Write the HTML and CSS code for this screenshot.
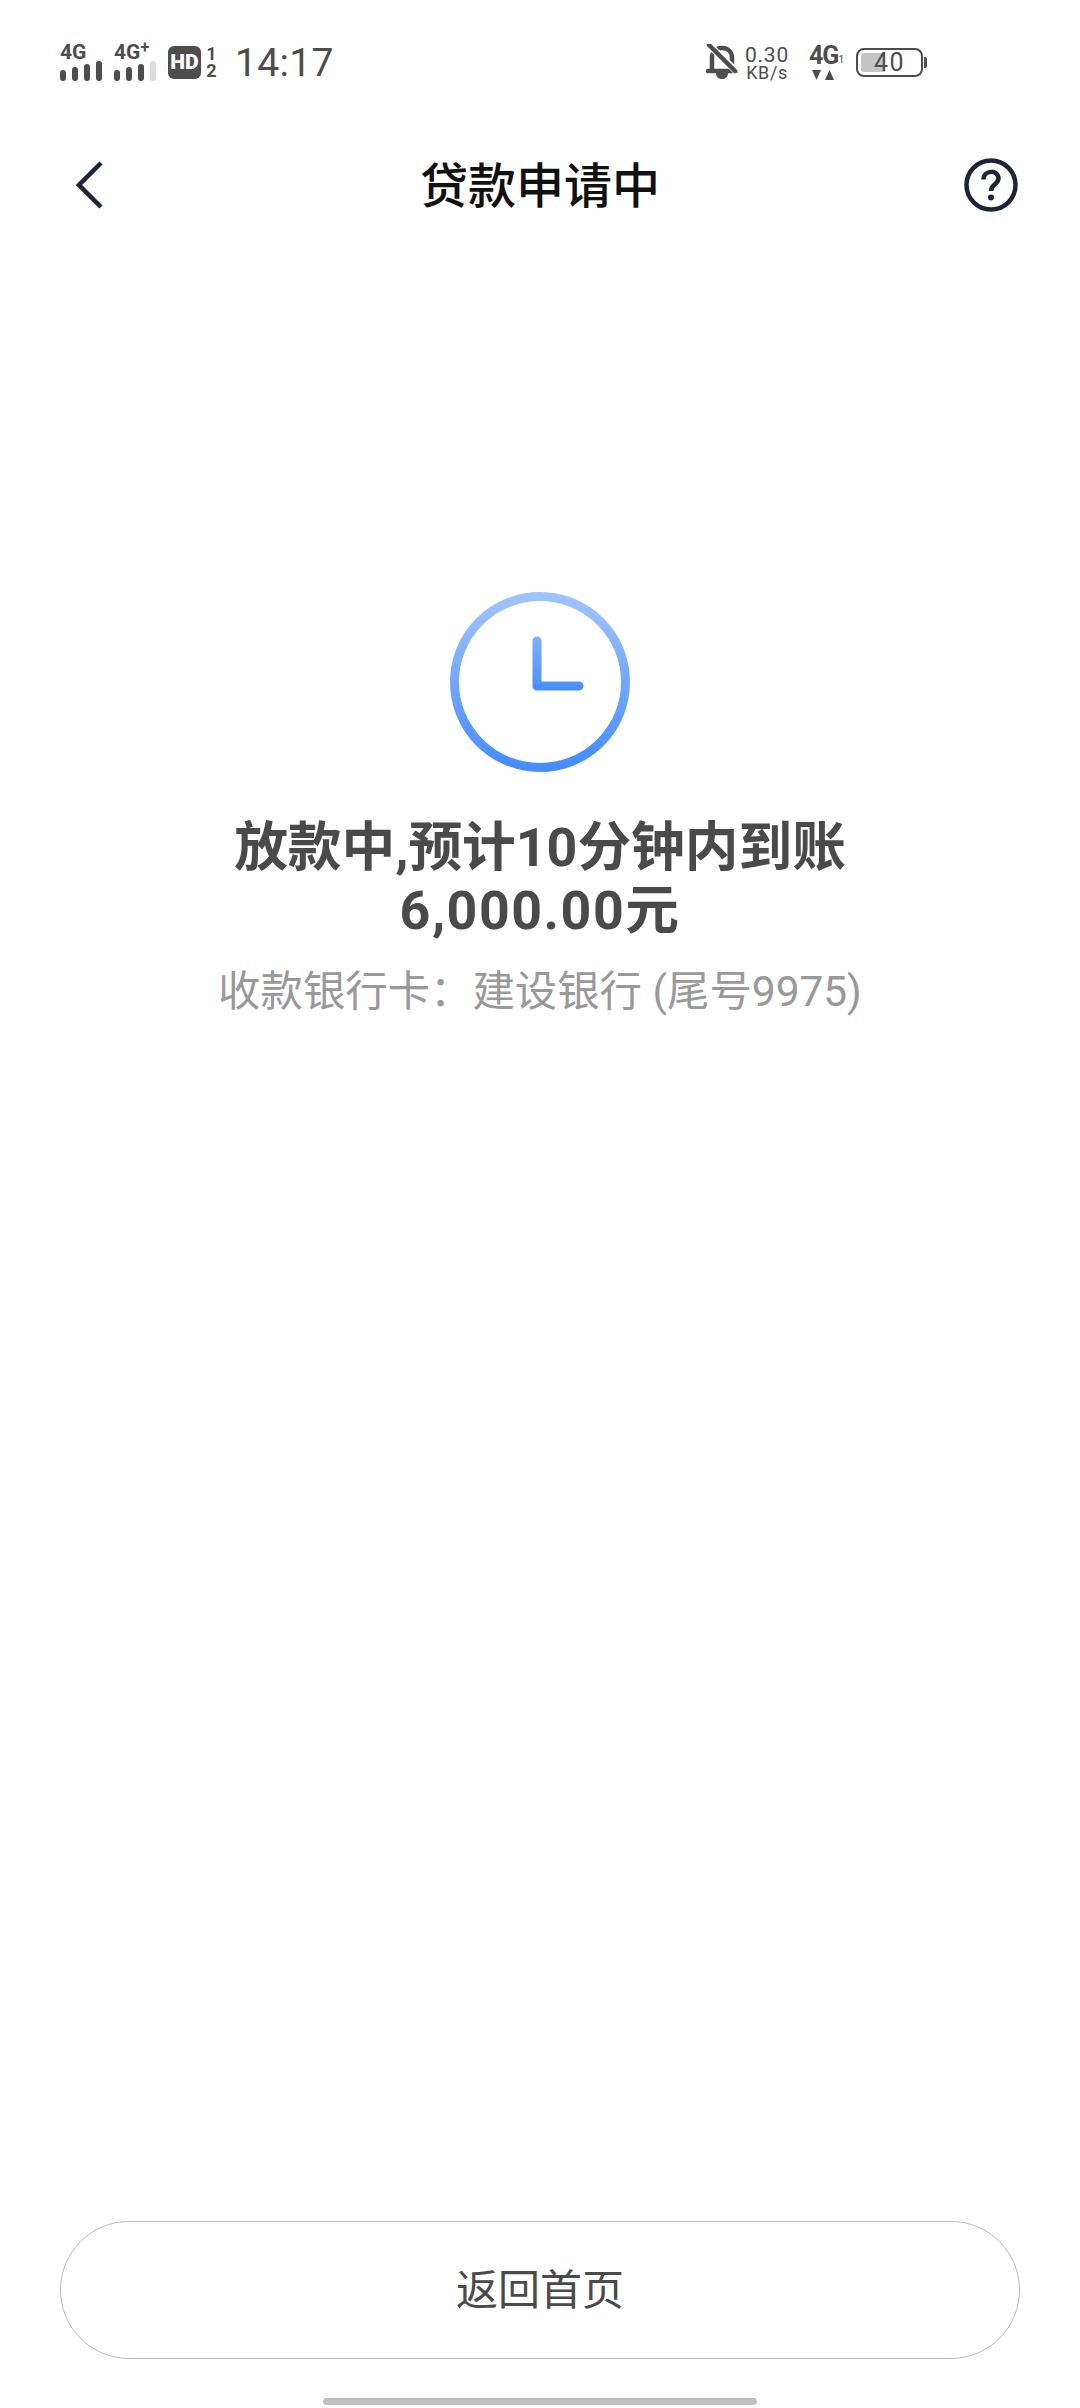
FILE: index.html
```html
<!DOCTYPE html>
<html>
	<head>
		<meta charset="UTF-8">
		<title>贷款申请中</title>
		<link rel="stylesheet" href="styles.css">
	</head>
	<body>
		<div class="page">
			<div class="status">
				<div class="statusLeft">
					<div class="signal">
						<span class="netName">4G</span>
						<svg width="42" height="20" viewBox="0 0 42 20">
							<rect x="0" y="9" width="6" height="11" rx="3" fill="#4d4d4d"/>
							<rect x="12" y="6" width="6" height="14" rx="3" fill="#4d4d4d"/>
							<rect x="24" y="3" width="6" height="17" rx="3" fill="#4d4d4d"/>
							<rect x="36" y="0" width="6" height="20" rx="3" fill="#4d4d4d"/>
						</svg>
					</div>
					<div class="signal">
						<span class="netName">4G<sup class="plus">+</sup></span>
						<svg width="42" height="20" viewBox="0 0 42 20">
							<rect x="0" y="9" width="6" height="11" rx="3" fill="#4d4d4d"/>
							<rect x="12" y="6" width="6" height="14" rx="3" fill="#4d4d4d"/>
							<rect x="24" y="3" width="6" height="17" rx="3" fill="#4d4d4d"/>
							<rect x="36" y="0" width="6" height="20" rx="3" fill="#dcdcdc"/>
						</svg>
					</div>
					<div class="hd"><span class="hdText">HD</span></div>
					<div class="simNum"><span>1</span><span>2</span></div>
					<div class="clock">14:17</div>
				</div>
				<div class="statusRight">
					<svg class="bell" width="32" height="36" viewBox="0 0 32 36">
						<path d="M6 25 L6 14 C6 8 10 4 16 4 C22 4 26 8 26 14 L26 25" fill="none" stroke="#4d4d4d" stroke-width="4.500"/>
						<path d="M2 27 L30 27" stroke="#4d4d4d" stroke-width="4.500" stroke-linecap="round"/>
						<path d="M10 29 C10 37 22 37 22 29 Z" fill="#4d4d4d"/>
						<path d="M4 2 L31 28" stroke="#fff" stroke-width="7"/>
						<path d="M3 1 L29 27" stroke="#4d4d4d" stroke-width="4.500" stroke-linecap="round"/>
					</svg>
					<div class="speed"><span class="speedNum">0.30</span><span class="speedUnit">KB/s</span></div>
					<div class="net2">
						<div class="net2Top"><span class="net2Name">4G</span><span class="net2Sim">1</span></div>
						<svg width="22" height="10" viewBox="0 0 22 10">
							<path d="M0 0 H9 L4.500 10 Z" fill="#4d4d4d"/>
							<path d="M13 10 H22 L17.500 0 Z" fill="#4d4d4d"/>
						</svg>
					</div>
					<div class="battery">
						<div class="batteryBox">
							<div class="batteryFill"></div>
							<span class="batteryText">40</span>
						</div>
						<div class="batteryNub"></div>
					</div>
				</div>
			</div>
			<div class="nav">
				<svg class="navBack" width="28" height="48" viewBox="0 0 28 48">
					<path d="M25 2 L3 24 L25 46" fill="none" stroke="#1c2438" stroke-width="4.500"/>
				</svg>
				<div class="navTitle">贷款申请中</div>
				<svg class="navHelp" width="54" height="54" viewBox="0 0 54 54">
					<circle cx="27" cy="27" r="24.500" fill="none" stroke="#1c2438" stroke-width="4.500"/>
					<path d="M19.500 21.500 C19.500 11.500 34.500 11.500 34.500 20.500 C34.500 26 27 26.500 27 33" fill="none" stroke="#1c2438" stroke-width="4.500"/>
					<circle cx="27" cy="39.500" r="3" fill="#1c2438"/>
				</svg>
			</div>
			<div class="main">
				<svg width="180" height="180" viewBox="0 0 180 180">
					<defs>
						<linearGradient id="clockBlue" x1="0" y1="0" x2="0" y2="1">
							<stop offset="0" stop-color="#a0c3fc"/>
							<stop offset="1" stop-color="#468cfb"/>
						</linearGradient>
						<linearGradient id="handBlue" gradientUnits="userSpaceOnUse" x1="0" y1="45" x2="0" y2="100">
							<stop offset="0" stop-color="#7fb0fb"/>
							<stop offset="1" stop-color="#468cfb"/>
						</linearGradient>
					</defs>
					<circle cx="90" cy="90" r="85.500" fill="none" stroke="url(#clockBlue)" stroke-width="9"/>
					<path d="M87 49 V94 H129" fill="none" stroke="url(#handBlue)" stroke-width="9" stroke-linecap="round" stroke-linejoin="round"/>
				</svg>
				<div class="result">放款中,预计10分钟内到账<br><span class="amount">6,000.00元</span></div>
				<div class="cardInfo">收款银行卡：建设银行 (尾号9975)</div>
			</div>
			<div class="footer">
				<div class="backBtn">返回首页</div>
				<div class="homeBar"></div>
			</div>
		</div>
	</body>
</html>
```
FILE: styles.css
```css
*{
	margin:0;
	padding:0;
	box-sizing:border-box;
}
body{
	background:#fff;
	font-family:"Roboto","Noto Sans CJK SC",sans-serif;
}
.page{
	display:flex;
	flex-direction:column;
	width:1080px;
	height:2408px;
	overflow:hidden;
}
.status{
	display:flex;
	justify-content:space-between;
	align-items:center;
	height:124px;
	padding:0 153px 0 60px;
	color:#4d4d4d;
}
.statusLeft{
	display:flex;
	align-items:center;
}
.statusRight{
	display:flex;
	align-items:center;
}
.signal{
	display:flex;
	flex-direction:column;
	width:54px;
	font-weight:700;
}
.netName{
	position:relative;
	height:17px;
	font-size:21px;
	line-height:16px;
}
.plus{
	position:absolute;
	top:-3px;
	font-size:16px;
	line-height:14px;
}
.hd{
	display:flex;
	justify-content:center;
	align-items:center;
	width:33px;
	height:33px;
	background:#4d4d4d;
	border-radius:6px;
}
.hdText{
	font-size:21px;
	font-weight:900;
	color:#fff;
}
.simNum{
	display:flex;
	flex-direction:column;
	width:31px;
	padding-right:10px;
	font-size:18px;
	font-weight:700;
	line-height:17px;
	text-align:center;
}
.clock{
	margin:2px 0 0 3px;
	font-size:39px;
	line-height:44px;
	letter-spacing:0.3px;
}
.speed{
	display:flex;
	flex-direction:column;
	align-items:center;
	width:46px;
	margin-left:6px;
}
.speedNum{
	font-size:21px;
	line-height:20px;
	letter-spacing:0.8px;
}
.speedUnit{
	font-size:18px;
	line-height:15px;
	letter-spacing:0.6px;
}
.net2{
	display:flex;
	flex-direction:column;
	width:32px;
	margin-left:19px;
	font-weight:700;
	align-items:flex-start;
}
.net2Top{
	display:flex;
	align-items:flex-end;
	height:24px;
	margin-bottom:2px;
}
.net2Name{
	font-size:25px;
	line-height:24px;
	letter-spacing:-1px;
}
.net2Sim{
	font-size:10px;
	line-height:16px;
	font-weight:400;
}
.net2 svg{
	margin-left:3px;
}
.battery{
	display:flex;
	align-items:center;
	margin-left:15px;
}
.batteryBox{
	position:relative;
	width:67px;
	height:29px;
	padding:3px;
	border:2.5px solid #4d4d4d;
	border-radius:8px;
}
.batteryFill{
	width:24px;
	height:100%;
	background:#c4c4c4;
	border-radius:3px 0 0 3px;
}
.batteryText{
	position:absolute;
	left:16px;
	top:0;
	font-size:25px;
	line-height:25px;
	letter-spacing:1.500px;
}
.batteryNub{
	width:3px;
	height:11px;
	background:#4d4d4d;
	border-radius:0 2px 2px 0;
	margin-left:1px;
}
.nav{
	display:grid;
	grid-template-columns:1fr auto 1fr;
	align-items:center;
	height:122px;
	padding:0 62px;
}
.navBack{
	margin-left:14px;
}
.navTitle{
	padding-top:3px;
	font-size:48px;
	font-weight:500;
	line-height:70px;
	color:#111;
}
.navHelp{
	justify-self:end;
}
.main{
	display:flex;
	flex:1;
	flex-direction:column;
	align-items:center;
	padding-top:346px;
}
.result{
	margin-top:44px;
	font-size:53.700px;
	font-weight:700;
	line-height:63px;
	color:#4a4a4a;
	text-align:center;
}
.amount{
	letter-spacing:1.500px;
}
.cardInfo{
	margin-top:22px;
	font-size:42.400px;
	line-height:56px;
	color:#999;
}
.footer{
	display:flex;
	flex-direction:column;
	align-items:center;
}
.backBtn{
	width:960px;
	height:138px;
	border:1px solid #bbb;
	border-radius:69px;
	font-size:42px;
	line-height:137px;
	color:#4a4a4a;
	text-align:center;
}
.homeBar{
	width:434px;
	height:7px;
	margin:39px 0 3px;
	background:#c0c0c0;
	border-radius:4px;
}
```
